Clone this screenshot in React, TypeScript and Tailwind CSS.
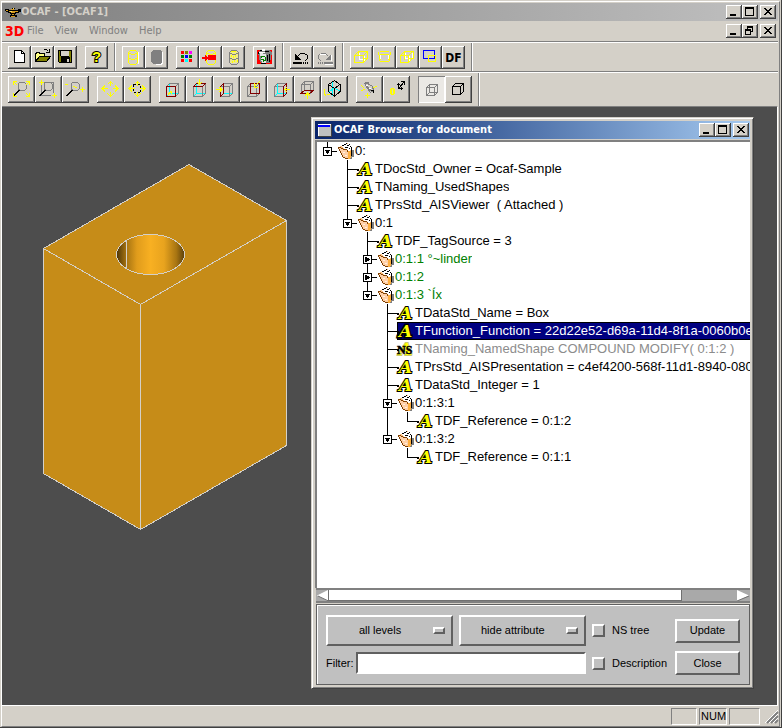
import React from "react";

const RAISED =
  "shadow-[inset_-1px_-1px_#404040,inset_1px_1px_#ffffff,inset_-2px_-2px_#808080]";

type Kids = { children?: React.ReactNode };

function Draw({ size, children }: Kids & { size: number }) {
  return (
    <svg
      width={size}
      height={size}
      viewBox={`0 0 ${size} ${size}`}
      fill="none"
      shapeRendering="crispEdges"
      className="block shrink-0"
      aria-hidden="true"
    >
      {children}
    </svg>
  );
}

/* ---------- window caption buttons ---------- */

function CaptionButton({ kind }: { kind: "min" | "max" | "restore" | "close" }) {
  return (
    <button type="button" aria-label={kind} className={`block h-[14px] w-4 bg-[#d4d0c8] ${RAISED}`}>
      <svg width="16" height="14" fill="none" shapeRendering="crispEdges" className="block">
        {kind === "min" && <path d="M4 9h6v2H4z" fill="#000" />}
        {kind === "max" && (
          <>
            <path d="M3.5 2.5h8v8h-8z" stroke="#000" />
            <path d="M3 3h9v1H3z" fill="#000" />
          </>
        )}
        {kind === "restore" && (
          <>
            <path d="M5.5 5V2.5h5v5H9M3.5 5.500h5v5h-5z" stroke="#000" />
            <path d="M5 3h6v1H5zM3 6h6v1H3z" fill="#000" />
          </>
        )}
        {kind === "close" && (
          <path
            d="M4 3h2v1h1v1h2V4h1V3h2v1h-1v1h-1v1H9v1h1v1h1v1h1v1h-2V9H9V8H7v1H6v1H4V9h1V8h1V7h1V6H6V5H5V4H4z"
            fill="#000"
          />
        )}
      </svg>
    </button>
  );
}

function CaptionButtons({ middle = "max" }: { middle?: "max" | "restore" }) {
  return (
    <div className="flex shrink-0 gap-[2px]">
      <div className="flex">
        <CaptionButton kind="min" />
        <CaptionButton kind={middle} />
      </div>
      <CaptionButton kind="close" />
    </div>
  );
}

/* ---------- toolbars ---------- */

function ToolButton({ label, big, pressed, children }: Kids & { label: string; big?: boolean; pressed?: boolean }) {
  const size = big ? "size-[27px]" : "size-[23px]";
  const face = pressed
    ? "bg-[#ebe9e5] shadow-[inset_1px_1px_#808080,inset_-1px_-1px_#ffffff]"
    : `bg-[#d4d0c8] ${RAISED}`;
  return (
    <button type="button" aria-label={label} title={label} className={`block shrink-0 ${size} ${face}`}>
      <Draw size={big ? 27 : 23}>{children}</Draw>
    </button>
  );
}

function Group({ children }: Kids) {
  return <div className="flex">{children}</div>;
}

function Divider() {
  return <div className="mx-[-2px] w-[2px] self-stretch border-l border-[#808080] bg-white" />;
}

const Y = "#ffff00";
const G = "#808080";
const K = "#000000";
const M = "#800000";
const C = "#00ffff";

function Cylinder({ stroke, fill = "none" }: { stroke: string; fill?: string }) {
  return (
    <>
      <path d="M8 5h8v12H8z" fill={fill} />
      <path
        d="M9 4.500h6M8 5.500h1M15 5.500h1M7.500 6v11M16.500 6v11M8 7.500h2M14 7.500h2M10 8.500h4M8 12.500h2M14 12.500h2M10 13.500h4M8 17.500h1M15 17.500h1M9 18.500h6"
        stroke={stroke}
      />
    </>
  );
}

function StandardBar() {
  return (
    <div className="flex gap-2 px-[6px]">
      <div className="flex items-center gap-2 pt-[3px] pb-[2px]">
        <Group>
          <ToolButton label="New">
            <path d="M6.500 4.500h7l3 3v9h-10z" fill="#fff" stroke={K} />
            <path d="M13.500 4.500v3h3" stroke={K} />
          </ToolButton>
          <ToolButton label="Open">
            <path d="M4.500 15.500v-8h1v-1h3v1h5v3" fill="#ffff80" stroke={K} />
            <path d="M4.500 15.500l4-5h11l-4 5z" fill="#808000" stroke={K} />
            <path d="M12.500 4.500l1-1h2l2 2M18.500 3v3.500H15" stroke={K} />
          </ToolButton>
          <ToolButton label="Save">
            <path d="M4.500 4.500h13v12h-12l-1-1z" fill="#808000" stroke={K} />
            <path d="M7 5h8v5H7z" fill="#d4d0c8" />
            <path d="M7 11h9v6H7zM7 9.500h8v1H7zM6 5h1v5H6z" fill={K} />
            <path d="M13 13h2v3h-2z" fill="#d4d0c8" />
          </ToolButton>
        </Group>
        <Group>
          <ToolButton label="Help">
            <text
              x="7"
              y="16"
              fontFamily="Liberation Sans"
              fontSize="15"
              fontWeight="700"
              fill={Y}
              stroke={K}
              strokeWidth="2"
              paintOrder="stroke"
            >
              ?
            </text>
          </ToolButton>
        </Group>
      </div>
      <Divider />
      <div className="flex items-center gap-2 pt-[3px] pb-[2px]">
        <Group>
          <ToolButton label="Cylinder">
            <path d="M16.500 6v12" stroke="#fff" />
            <g transform="translate(-1 0)">
              <Cylinder stroke={Y} />
            </g>
          </ToolButton>
          <ToolButton label="Shape">
            <path d="M9 5h7l2 2v10l-2 2h-5l-2-2z" fill="#fff" />
            <path d="M8 4h7l2 2v10l-2 2H8l-2-2V6z" fill={G} />
          </ToolButton>
        </Group>
        <Group>
          <ToolButton label="Colors">
            <path d="M5 5h3v3H5zM5 13h3v3H5zM13 13h3v3h-3z" fill="#ff0000" />
            <path d="M9 5h3v3H9z" fill="#808000" />
            <path d="M13 5h3v3h-3z" fill="#ff00ff" />
            <path d="M5 9h3v3H5zM13 9h3v3h-3z" fill="#008000" />
            <path d="M9 9h3v3H9z" fill="#0000ff" />
            <path d="M9 13h3v3H9z" fill={C} />
          </ToolButton>
          <ToolButton label="Insert">
            <Cylinder stroke={Y} />
            <path d="M9 9h8v5H9zM3 11h6v2H3zM6 9h1v6H6zM7 10h1v4H7z" fill="#ff0000" />
          </ToolButton>
          <ToolButton label="Transparency">
            <Cylinder stroke={G} fill="#eee98c" />
            <path d="M9.500 9v2M11.500 10v2M13.500 9v2M15 14v2M10 15v2M12.500 14v2M9 5.500h5" stroke={Y} />
          </ToolButton>
        </Group>
        <Group>
          <ToolButton label="Delete">
            <path d="M4 4h15v14H4z" fill="#ff0000" />
            <path d="M5 6l3-2h9l2 3-2 10-8 1-2-2z" fill={G} />
            <path d="M7 7l6 1v9l-4 0z" fill="#e8e8e8" />
            <path d="M5 6h1v2H5zM7 4h2v1H7zM12 5h4v1h-4zM16 8h1v8h-1zM8 17h5v1H8zM14 9h1v6h-1z" fill={K} />
            <path d="M8.500 12v-2h3M12.500 11v3h-2M8 13.500h2v2" stroke="#008000" />
            <path d="M9 3h3v2H9zM6 6h6v1H6z" fill="#fff" />
          </ToolButton>
        </Group>
      </div>
      <Divider />
      <div className="flex items-center pt-[3px] pb-[2px]">
        <ToolButton label="Undo">
          <path d="M8 9.500h1M9 8.500h1M10 7.500h5M15 8.500h2M17.500 9v4M16 13.500h1M15 14.500h1" stroke={K} />
          <path d="M5 8v6h6zM3 16h9v2H3zM13 16h1v2h-1zM15 16h1v2h-1zM17 16h1v2h-1z" fill={K} />
        </ToolButton>
        <ToolButton label="Redo">
          <path d="M14 9.500h1M13 8.500h1M8 7.500h5M6 8.500h2M5.500 9v4M6 13.500h1M7 14.500h1" stroke={G} />
          <path d="M18 8v6h-6zM11 16h9v2h-9zM9 16h1v2H9zM7 16h1v2H7zM5 16h1v2H5z" fill={G} />
          <path d="M12 18.500h8M18.500 9v6M7 8.500h6" stroke="#fff" />
        </ToolButton>
      </div>
      <Divider />
      <div className="flex items-center pt-[3px] pb-[2px]">
        <ToolButton label="Box">
          <path d="M9.500 7v6M9 13.500h4M14.500 10v5" stroke="#fff" />
          <path d="M4.500 9.500h9v7h-9zM8.500 5.500h9v7h-4M8.500 6v4M4.500 9.500l4-4M13.500 9.500l4-4M13.500 16.500l4-4" stroke={Y} />
        </ToolButton>
        <ToolButton label="Cylinder primitive">
          <path d="M7.500 9v5M15.500 9v5" stroke="#fff" />
          <path d="M7 5.500h9M5.500 6v3M17.500 6v3M7 8.500h9M6.500 9v6M16.500 9v6M7 15.500h9M7 13.500h1M15 13.500h1" stroke={Y} />
        </ToolButton>
        <ToolButton label="Cut">
          <path d="M9.500 7v6M9 12.500h3M13.500 10v5M16.500 7v5" stroke="#fff" />
          <path d="M4.500 9.500h8v7h-8zM8.500 5.500h9v7h-5M8.500 5.500v8M4.500 9.500l4-4M12.500 9.500l4-4M12.500 16.500l4-4" stroke={Y} />
        </ToolButton>
        <ToolButton label="Select area">
          <path d="M9.500 9.500h7v6h-7z" stroke={Y} />
          <path d="M4.500 4.500h11v8h-11z" stroke="#0000ff" />
          <path d="M9.500 14.500v-5h7" stroke={Y} />
        </ToolButton>
        <button
          type="button"
          className={`block size-[23px] bg-[#d4d0c8] text-center font-['DejaVu_Sans_Condensed','DejaVu_Sans',sans-serif] text-[12px] leading-[22px] font-bold ${RAISED}`}
        >
          DF
        </button>
      </div>
      <Divider />
    </div>
  );
}

function Lens({ x = 0 }: { x?: number }) {
  return (
    <g transform={`translate(${x} 0)`}>
      <path d="M11.500 6.500h5l2 2v4l-2 2h-4l-2.500-2v-4z" stroke={G} />
      <path d="M10 14h2v1h-1v1h-1v1H9v1H8v1H7v1H5v-1h1v-1h1v-1h1v-1h1v-1h1z" fill={K} />
    </g>
  );
}

const BACK = "M10.500 7.500h9v10h-9z";
const FRONT = "M7.500 10.500h9v10h-9z";

function ViewCube({ children }: Kids) {
  return (
    <>
      <path d={BACK} stroke={G} />
      <path d="M10.500 17.500h9M10.500 8v9M7.500 20.500l3-3" stroke={C} />
      <path d={FRONT} stroke={G} />
      <path d="M7.500 10.500l3-3M16.500 10.500l3-3M16.500 20.500l3-3M10.500 7.500h9v10" stroke={G} />
      {children}
    </>
  );
}

function ViewBar() {
  return (
    <div className="flex gap-2 px-[6px]">
      <div className="flex items-center gap-2 py-[3px]">
        <Group>
          <ToolButton big label="Fit all">
            <Lens />
            <path d="M5.500 9V5.500H9M6 6l3 3M18 5.500h3.500V9M21 6l-3 3M5.500 17v3.500H9M18 20.500h3.500V17M21 20l-3-3" stroke={Y} />
          </ToolButton>
          <ToolButton big label="Fit area">
            <path d="M6.500 8v12M8 6.500h11M18.500 7v10M7 19.500h9" stroke={G} />
            <Lens x={-1} />
            <path d="M4 6.500h5M6.500 4v5M17 19.500h5M19.500 17v5" stroke={Y} />
          </ToolButton>
          <ToolButton big label="Zoom">
            <Lens x={-1} />
            <path d="M3 8.500h3M11 10.500h2M13 11.500h2M18 13.500h5M20.500 11v5" stroke={Y} />
          </ToolButton>
        </Group>
        <Group>
          <ToolButton big label="Pan">
            <path d="M5.500 12.500h5M16 12.500h5M13.500 5.500v4M13.500 16v4" stroke={Y} />
            <path d="M8 9.500l-3 3 3 3M18 9.500l3 3-3 3M10.500 8.500l3-3 3 3M10.500 17.500l3 3 3-3" stroke={Y} />
          </ToolButton>
          <ToolButton big label="Global pan">
            <path d="M9.500 8.500h7v8h-7z" stroke={K} strokeDasharray="2 2" />
            <path d="M5.500 12.500h5M16 12.500h5M13.500 6v4M13.500 16v4" stroke={Y} />
            <path d="M8 9.500l-3 3 3 3M18 9.500l3 3-3 3M10.500 8.500l3-3 3 3M10.500 17.500l3 3 3-3" stroke={Y} />
          </ToolButton>
        </Group>
        <Group>
          <ToolButton big label="Front">
            <ViewCube>
              <path d={FRONT} stroke={M} />
              <path d="M9 18.500l3-3M10.500 15.500H12v2" stroke={Y} />
            </ViewCube>
          </ToolButton>
          <ToolButton big label="Top">
            <ViewCube>
              <path d="M7.500 10.500h9l3-3h-9z" stroke={M} />
              <path d="M13.500 3v5M11 6l2.500 2.500L16 6" stroke={Y} />
            </ViewCube>
          </ToolButton>
          <ToolButton big label="Left">
            <ViewCube>
              <path d="M7.500 10.500v10l3-3v-10z" stroke={M} />
              <path d="M3 13.500h6M6.500 11l2.500 2.500L6.500 16" stroke={Y} />
            </ViewCube>
          </ToolButton>
          <ToolButton big label="Back">
            <path d={FRONT} stroke={G} />
            <path d="M7.500 10.500l3-3M16.500 10.500l3-3M16.500 20.500l3-3M7.500 20.500l3-3" stroke={G} />
            <path d={BACK} stroke={M} />
            <path d="M20 5l-5 5M14.500 7v4H18" stroke={Y} />
          </ToolButton>
          <ToolButton big label="Right">
            <ViewCube>
              <path d="M10.500 7.500v10h6" stroke={C} />
              <path d="M16.500 10.500v10l3-3v-10z" stroke={M} />
              <path d="M18 13.500h5M20 11l-2.500 2.500L20 16" stroke={Y} />
            </ViewCube>
          </ToolButton>
          <ToolButton big label="Bottom">
            <path d="M7.500 8.500h9v9h-9zM10.500 5.500h9v9h-9zM7.500 8.500l3-3M16.500 8.500l3-3" stroke={G} />
            <path d="M6.500 17.500h9l4-3h-9z" stroke={M} />
            <path d="M13.500 17v6M11 19.500l2.500-2.500 2.500 2.500" stroke={Y} />
          </ToolButton>
          <ToolButton big label="Axonometric">
            <path d="M11 6v14M8 16l5-4 6 3" stroke={C} />
            <path d="M7.500 8.500l6-4 5.500 4v7l-5.500 5-6-5zM7.500 8.500l6 4 5.500-4M13.500 12v8" stroke={K} />
            <path d="M3.500 13v5l2 2.500M6 18.500h3" stroke={Y} />
          </ToolButton>
        </Group>
        <Group>
          <ToolButton big label="Rotation">
            <path d="M8.500 7.500h3l5 3 1 4-3 2-3-4z" stroke={G} />
            <path d="M9 6.500h4M11 10.500l4 4" stroke={G} strokeWidth="2" />
            <path d="M10 9.500h2M13 12.500h2" stroke="#fff" />
            <path d="M5 9.500l3 2M17 12l4-2M9 19.500h5M11.500 17v5M5 15l4-2" stroke={Y} />
            <path d="M15 14.500h2v2" stroke={K} />
          </ToolButton>
          <ToolButton big label="Reset">
            <path d="M8 12h3v1h1v5h-1v1H8v-1H7v-5h1zM9 13v5h1v-5z" fill={Y} fillRule="evenodd" />
            <path d="M15.500 7v5h4M16 12l5-6M14 8.500h3M18 5.500h3.500V9M18.500 11v3" stroke={K} />
          </ToolButton>
        </Group>
        <Group>
          <ToolButton big pressed label="Wireframe">
            <path d="M8.500 11.500h8v8h-8zM11.500 8.500h8v8h-8zM8.500 11.500l3-3M16.500 11.500l3-3M8.500 19.500l3-3M16.500 19.500l3-3" stroke={G} />
          </ToolButton>
          <ToolButton big label="Shading">
            <path d="M7.500 10.500h8v8h-8zM7.500 10.500l3-3h8v8l-3 3M15.500 10.500l3-3" stroke={K} />
          </ToolButton>
        </Group>
      </div>
      <Divider />
    </div>
  );
}

/* ---------- tree ---------- */

type Cell = "none" | "line" | "tee" | "elbow" | "open" | "closed" | "openLast" | "root";

function Guide({ kind }: { kind: Cell }) {
  const boxed = kind === "open" || kind === "closed" || kind === "openLast" || kind === "root";
  const half = kind === "elbow" || kind === "openLast" || kind === "root";
  return (
    <svg width="20" height="18" fill="none" shapeRendering="crispEdges" className="block shrink-0">
      {kind !== "none" && <path d={half ? "M10.500 0v9" : "M10.500 0v18"} stroke={K} />}
      {kind !== "none" && kind !== "line" && <path d="M10 9.500h10" stroke={K} />}
      {boxed && (
        <>
          <path d="M6.500 5.500h8v8h-8z" fill="#fff" stroke={K} />
          {kind === "closed" ? (
            <path d="M8 7h2v1h2v1h1v1h-1v1h-2v1H8z" fill={K} />
          ) : (
            <path d="M8 8h5v1h-1v2h-1v1h-1v-1H9V9H8z" fill={K} />
          )}
        </>
      )}
    </svg>
  );
}

function FolderIcon() {
  return (
    <svg width="17" height="18" fill="none" shapeRendering="crispEdges" className="block shrink-0">
      <path d="M14 8h3v7h-2v2h-3z" fill={G} />
      <path d="M1 5l3-1 7-3 3 2 1 4-1 8-2 2-6-1z" fill="#ffc080" />
      <path d="M4 4l5-3 1 1 2-1 2 3v4l-3 1z" fill="#fff" />
      <path d="M5 3.500h2M7 2.500h2M9 1.500h1M10 3.500h2M12 2.500h1M13 4.500h1M8 5.500h3M14.500 5v9M12 6.500h1" stroke={K} />
      <path d="M1 5l4 2 5 1 2 9-5-1-4-6z" fill="#ffd0a8" />
      <path d="M1.500 5v2M2.500 7v2M3.500 9v2M4.500 11v2M5.500 13v2M6 15.500h2M8 16.500h4M2 5.500h2M4 6.500h2M6 7.500h4M10.500 8v2" stroke="#804000" />
      <path d="M11 9h3v6l-2 2h-1z" fill="#ffb040" />
      <path d="M6 10h2v1H6zM8 13h2v1H8z" fill="#fff0e0" />
    </svg>
  );
}

function LetterIcon({ named, selected }: { named?: boolean; selected?: boolean }) {
  return (
    <svg width="17" height="18" className="block shrink-0 overflow-visible">
      <path d="M0 9h2v2H0z" fill={K} />
      <text
        x="2"
        y="15"
        fontFamily="DejaVu Serif"
        fontStyle="italic"
        fontWeight="700"
        fontSize="17"
        fill={Y}
        stroke={named ? "#c8c870" : K}
        strokeWidth={selected ? 3 : 2}
        paintOrder="stroke"
      >
        A
      </text>
      {named && (
        <text x="0" y="14" fontFamily="Liberation Serif" fontWeight="700" fontSize="12" fill={K} stroke={K} strokeWidth="0.5">
          NS
        </text>
      )}
    </svg>
  );
}

type Row = {
  cells: Cell[];
  text: string;
  icon: "folder" | "attr" | "named";
  tone?: string;
  selected?: boolean;
};

const ROWS: Row[] = [
  { cells: ["root"], icon: "folder", text: "0:" },
  { cells: ["none", "tee"], icon: "attr", text: "TDocStd_Owner = Ocaf-Sample" },
  { cells: ["none", "tee"], icon: "attr", text: "TNaming_UsedShapes" },
  { cells: ["none", "tee"], icon: "attr", text: "TPrsStd_AISViewer  ( Attached )" },
  { cells: ["none", "openLast"], icon: "folder", text: "0:1" },
  { cells: ["none", "none", "tee"], icon: "attr", text: "TDF_TagSource = 3" },
  { cells: ["none", "none", "closed"], icon: "folder", text: "0:1:1 °~linder", tone: "text-[#008000]" },
  { cells: ["none", "none", "closed"], icon: "folder", text: "0:1:2", tone: "text-[#008000]" },
  { cells: ["none", "none", "openLast"], icon: "folder", text: "0:1:3 `Íx", tone: "text-[#008000]" },
  { cells: ["none", "none", "none", "tee"], icon: "attr", text: "TDataStd_Name = Box" },
  {
    cells: ["none", "none", "none", "tee"],
    icon: "attr",
    text: "TFunction_Function = 22d22e52-d69a-11d4-8f1a-0060b0ee",
    selected: true,
  },
  {
    cells: ["none", "none", "none", "tee"],
    icon: "named",
    text: "TNaming_NamedShape COMPOUND MODIFY( 0:1:2 )",
    tone: "text-[#8c8c8c]",
  },
  {
    cells: ["none", "none", "none", "tee"],
    icon: "attr",
    text: "TPrsStd_AISPresentation = c4ef4200-568f-11d1-8940-0800",
  },
  { cells: ["none", "none", "none", "tee"], icon: "attr", text: "TDataStd_Integer = 1" },
  { cells: ["none", "none", "none", "open"], icon: "folder", text: "0:1:3:1" },
  { cells: ["none", "none", "none", "line", "elbow"], icon: "attr", text: "TDF_Reference = 0:1:2" },
  { cells: ["none", "none", "none", "openLast"], icon: "folder", text: "0:1:3:2" },
  { cells: ["none", "none", "none", "none", "elbow"], icon: "attr", text: "TDF_Reference = 0:1:1" },
];

function TreeRow({ row }: { row: Row }) {
  const tone = row.selected
    ? "bg-[#000080] text-white shadow-[inset_0_1px_#000,inset_0_-1px_#000,inset_1px_0_#000]"
    : row.tone ?? "text-black";
  return (
    <li className="flex h-[18px]">
      {row.cells.map((kind, i) => (
        <Guide key={i} kind={kind} />
      ))}
      <div className={`flex min-w-0 flex-1 ${tone}`}>
        {row.icon === "folder" ? (
          <FolderIcon />
        ) : (
          <LetterIcon named={row.icon === "named"} selected={row.selected} />
        )}
        <span className="overflow-hidden pl-px leading-[18px] whitespace-pre">{row.text}</span>
      </div>
    </li>
  );
}

/* ---------- browser dialog ---------- */

const BEVEL = "border-2 border-t-white border-l-white border-r-[#606060] border-b-[#606060]";

function LevelSelect({ label, value, indent }: { label: string; value: string; indent: string }) {
  return (
    <div className="relative">
      <select
        aria-label={label}
        className={`block h-[31px] w-full appearance-none rounded-none bg-[#c0c0c0] ${indent} ${BEVEL}`}
      >
        <option>{value}</option>
      </select>
      <span className={`pointer-events-none absolute top-3 right-2 h-[7px] w-3 bg-[#c0c0c0] ${BEVEL}`} />
    </div>
  );
}

function Check({ label }: { label: string }) {
  return (
    <label className="flex items-center gap-[7px]">
      <input type="checkbox" className={`size-[13px] shrink-0 appearance-none bg-[#c0c0c0] ${BEVEL}`} />
      {label}
    </label>
  );
}

function PushButton({ children }: Kids) {
  return (
    <button type="button" className={`h-6 w-[65px] bg-[#c0c0c0] ${BEVEL}`}>
      {children}
    </button>
  );
}

function BrowserWindow() {
  return (
    <section
      aria-label="OCAF Browser for document"
      className="absolute top-[10px] left-[309px] flex h-[572px] w-[443px] flex-col border border-[#d4d0c8] border-r-[#404040] border-b-[#404040] bg-[#d4d0c8] p-[3px] shadow-[inset_1px_1px_#fff,inset_-1px_-1px_#808080]"
    >
      <header className="flex h-[18px] shrink-0 items-center bg-linear-to-r from-[#0a246a] to-[#a6caf0] pr-px pl-[2px] text-white">
        <svg width="15" height="14" shapeRendering="crispEdges" className="block">
          <path d="M1 1h13v12H1z" fill="#c0c0c0" stroke="#fff" />
          <path d="M1 2h12v2H1z" fill="#0000ff" />
          <path d="M1 13.500h14M14.500 1v12" stroke="#404040" />
        </svg>
        <h2 className="ml-[2px] flex-1 font-['DejaVu_Sans_Condensed','DejaVu_Sans',sans-serif] text-[11px] font-bold">
          OCAF Browser for document
        </h2>
        <CaptionButtons />
      </header>
      <div className="mt-px flex min-h-0 flex-1 flex-col border-t-2 border-l-2 border-[#808080] bg-white">
        <ul className="min-h-0 flex-1 overflow-hidden text-[13px]">
          {ROWS.map((row, i) => (
            <TreeRow key={i} row={row} />
          ))}
        </ul>
      </div>
      <div className="ml-px flex h-[15px] shrink-0 border-y-2 border-t-[#808080] border-b-[#808080] bg-[#a9a9a9]">
        <button type="button" aria-label="Scroll left" className="w-[13px]">
          <svg width="13" height="11" className="block">
            <path d="M12 0v11L1 5.500z" fill="#fff" />
            <path d="M12.500 0v11L2 6" fill="none" stroke="#707070" />
          </svg>
        </button>
        <div className="flex flex-1">
          <div className="w-[353px] border-r border-b border-[#707070] bg-white" />
        </div>
        <button type="button" aria-label="Scroll right" className="w-[13px]">
          <svg width="13" height="11" className="block">
            <path d="M0 0l12 5.500L0 11z" fill="#fff" />
            <path d="M0 11l12-5" fill="none" stroke="#707070" />
          </svg>
        </button>
      </div>
      <form className="mt-px ml-px grid h-[81px] shrink-0 grid-cols-[127px_127px_77px_65px] content-start items-center gap-x-[6px] gap-y-[5px] border border-[#606060] bg-[#c0c0c0] pt-[10px] pr-2 pl-[9px] text-[11px] whitespace-nowrap shadow-[inset_1px_1px_#fff]">
        <LevelSelect label="Levels" value="all levels" indent="pl-[31px]" />
        <LevelSelect label="Attributes" value="hide attribute" indent="pl-5" />
        <Check label="NS tree" />
        <PushButton>Update</PushButton>
        <label className="col-span-2 flex items-center gap-[5px]">
          <span className="w-[25px]">Filter:</span>
          <input
            type="text"
            className="h-[22px] min-w-0 flex-1 border-2 border-t-[#606060] border-r-white border-b-white border-l-[#606060] bg-white px-1 outline-none"
          />
        </label>
        <Check label="Description" />
        <PushButton>Close</PushButton>
      </form>
    </section>
  );
}

/* ---------- 3D scene ---------- */

function Scene() {
  return (
    <svg width="300" height="440" viewBox="2 107 300 440" fill="none" className="block">
      <defs>
        <linearGradient id="bore" x1="0" x2="1" y1="0" y2="0">
          <stop offset="0" stopColor="#4d3508" />
          <stop offset="0.15" stopColor="#a87512" />
          <stop offset="0.3" stopColor="#e09c1c" />
          <stop offset="0.5" stopColor="#f8b022" />
          <stop offset="0.7" stopColor="#e8a31e" />
          <stop offset="0.88" stopColor="#a87512" />
          <stop offset="1" stopColor="#5c400a" />
        </linearGradient>
      </defs>
      <g stroke="#d4d0c8" shapeRendering="crispEdges">
        <path d="M43.500 248.500L189 164.500L286.500 220.500V445.500L140.500 529.500L43.500 473.500z" fill="#c68c18" />
        <path d="M43.500 248.500L140.500 304.500L286.500 220.500M140.500 304.500V529.500" />
        <ellipse cx="150.500" cy="254.500" rx="34" ry="20" fill="url(#bore)" />
        <path d="M126.500 240v29" />
      </g>
    </svg>
  );
}

/* ---------- application frame ---------- */

function LampIcon() {
  return (
    <svg width="16" height="16" shapeRendering="crispEdges" className="block">
      <path d="M7 4h3v1H7zM0 5h4v1h9V5h3v3h-2v1h-3v1H5V9H3V8H1V7H0zM6 10h4v1H6zM5 11h7v2H5z" fill={K} />
      <path d="M1 6h2v1H1zM4 7h9v1H4zM6 8h4v1H6zM6 5h3v1H6zM7 10h2v1H7zM6 12h4v1H6z" fill="#d69a1e" />
      <path d="M5 7h2v1H5zM8 4h1v1H8z" fill="#ffe060" />
    </svg>
  );
}

function Pane({ width, children }: Kids & { width: string }) {
  return (
    <div
      className={`h-[17px] ${width} border border-t-[#808080] border-r-white border-b-white border-l-[#808080] pl-px leading-[15px]`}
    >
      {children}
    </div>
  );
}

export default function App() {
  return (
    <div className="flex min-h-screen flex-col border-r border-b border-[#404040] bg-[#d4d0c8] pt-px pr-px pl-px font-['Liberation_Sans',Arial,sans-serif] text-black">
      <div className="flex flex-1 flex-col border-t border-r border-b border-l border-t-white border-r-[#808080] border-b-[#808080] border-l-white pt-px">
        <header className="mr-px flex h-[18px] items-center bg-linear-to-r from-[#808080] to-[#c0c0c0] pr-[2px] pl-[3px] text-[#d4d0c8]">
          <LampIcon />
          <h1 className="flex-1 font-['DejaVu_Sans_Condensed','DejaVu_Sans',sans-serif] text-[11px] font-bold">
            OCAF - [OCAF1]
          </h1>
          <CaptionButtons />
        </header>
        <nav className="mr-px flex h-5 items-center pr-[2px] pl-[3px] font-['DejaVu_Sans_Condensed','DejaVu_Sans',sans-serif] text-[11px] text-[#808080]">
          <span className="w-[17px] text-[14px] font-bold text-[#ff0000]">3D</span>
          <div className="flex flex-1 gap-[11px] pl-[5px]">
            <button type="button">File</button>
            <button type="button">View</button>
            <button type="button">Window</button>
            <button type="button">Help</button>
          </div>
          <CaptionButtons middle="restore" />
        </nav>
        <div className="mr-px border-t border-[#808080]">
          <div className="border-t border-white">
            <StandardBar />
          </div>
        </div>
        <div className="mr-px border-t border-[#808080]">
          <div className="border-t border-white">
            <ViewBar />
          </div>
        </div>
        <main className="relative mr-px flex-1 border-t border-r border-b border-t-[#808080] border-r-white border-b-white bg-[#4d4d4d]">
          <Scene />
          <BrowserWindow />
        </main>
        <footer className="flex h-5 items-center justify-end gap-[2px] text-[11px]">
          <Pane width="w-[26px]" />
          <Pane width="w-7">NUM</Pane>
          <Pane width="w-[31px]" />
          <svg width="17" height="16" className="block">
            <path d="M5 15L16 4M9 15l7-7M13 15l3-3" stroke={G} strokeWidth="2" />
            <path d="M3 15L16 2M7 15l9-9M11 15l5-5" stroke="#fff" />
          </svg>
        </footer>
      </div>
    </div>
  );
}
